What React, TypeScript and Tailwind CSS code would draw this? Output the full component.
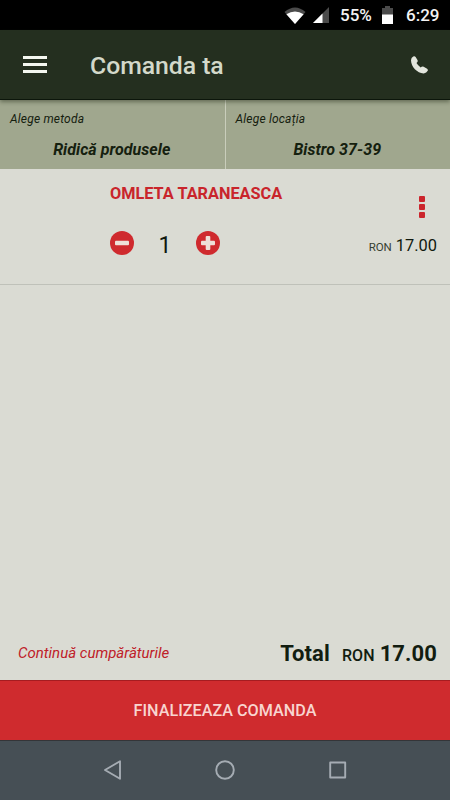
import type { ReactNode } from "react";

function StatusBar() {
  return (
    <div className="flex h-[30px] shrink-0 items-center justify-end bg-black pr-[10px] text-[17px] font-medium leading-[30px] text-[#f4f4f4]">
      <svg className="mr-[7px] h-[17px] w-[22px]" viewBox="0 0 22 17">
        <path d="M.5 5Q11-4 21.5 5L11 17Z" fill="#4b4b4b" />
        <path d="M2.4 7.3Q11 1.5 19.6 7.3L11 17Z" fill="#fff" />
      </svg>
      <svg className="mr-[11px] h-[16px] w-[16px]" viewBox="0 0 16 16">
        <path d="M16 0V16H0Z" fill="#4b4b4b" />
        <path d="M9.5 6.5V16H0Z" fill="#fff" />
      </svg>
      <span className="w-[33px] whitespace-nowrap">55%</span>
      <svg className="ml-[9px] mr-[13px] h-[18px] w-[11px]" viewBox="0 0 11 18">
        <path d="M3 0H8V2H11V9H0V2H3Z" fill="#4b4b4b" />
        <path d="M0 8.5H11V18H0Z" fill="#fff" />
      </svg>
      <span className="w-[34px] whitespace-nowrap">6:29</span>
    </div>
  );
}

function Header() {
  return (
    <header className="z-10 flex h-[70px] shrink-0 items-center border-b border-[#0c160b] bg-[#242f1f] pl-[23px] pr-[22px] shadow-[0_2px_4px_rgba(30,40,20,0.45)]">
      <div className="flex w-[24px] flex-col gap-[4px]">
        <span className="h-[3px] bg-[#f4f7f0]" />
        <span className="h-[3px] bg-[#f4f7f0]" />
        <span className="h-[3px] bg-[#f4f7f0]" />
      </div>
      <h1 className="ml-[43px] mt-[2px] grow whitespace-nowrap text-[24.8px] font-medium leading-[30px] tracking-[-0.05px] text-[#d3d9ca]">Comanda ta</h1>
      <svg className="h-[18px] w-[17px]" viewBox="0 0 17 18" fill="#e3e6dd">
        <path d="M2.2.4Q3.8-.3 4.6.9L6.5 4.1Q7 5.4 6.2 6.3L5.5 7.1Q6.9 9.6 9.7 11.4L10.6 10.8Q11.7 10.2 12.7 10.7L16.1 12.7Q17.3 13.6 16.7 14.8Q15.6 17.2 12.8 17.4C6.4 17.6 0 10.7 0 4.3Q.1 1.5 2.2.4Z" />
      </svg>
    </header>
  );
}

function Choice({ label, children }: { label: string; children: ReactNode }) {
  return (
    <div className="flex flex-1 flex-col pt-[11px] italic text-[#15200f]">
      <span className="ml-[10px] whitespace-nowrap text-[12px] leading-[16px] tracking-[0.2px]">{label}</span>
      <strong className="mr-[1px] mt-[13px] whitespace-nowrap text-center text-[16px] font-bold leading-[20px] tracking-[0.05px]">{children}</strong>
    </div>
  );
}

function RoundButton({ plus }: { plus?: boolean }) {
  return (
    <svg className="h-[24px] w-[24px]" viewBox="0 0 24 24">
      <circle cx="12" cy="12" r="12" fill="#cf2a2e" />
      <rect x="5" y="9.7" width="14" height="4.6" rx="1" fill="#eee0d8" />
      {plus && <rect x="9.7" y="5" width="4.6" height="14" rx="1" fill="#eee0d8" />}
    </svg>
  );
}

function CartItem() {
  return (
    <section className="flex h-[116px] shrink-0 justify-between border-b border-[#bfc1b9] pl-[110px] pr-[13px]">
      <div className="flex flex-col pt-[15px]">
        <h2 className="whitespace-nowrap text-[16.3px] font-bold leading-[20px] text-[#c9252b]">OMLETA TARANEASCA</h2>
        <div className="mt-[27px] flex h-[24px] items-center">
          <RoundButton />
          <span className="w-[62px] pt-[5px] text-center text-[23px] leading-[24px] text-[#10190e]">1</span>
          <RoundButton plus />
        </div>
      </div>
      <div className="flex flex-col items-end pt-[27px]">
        <div className="mr-[12px] flex flex-col gap-[2px]">
          <span className="h-[6px] w-[6px] rounded-[1px] bg-[#cb252c]" />
          <span className="h-[6px] w-[6px] rounded-[1px] bg-[#cb252c]" />
          <span className="h-[6px] w-[6px] rounded-[1px] bg-[#cb252c]" />
        </div>
        <div className="mt-[17px] whitespace-nowrap text-[16.4px] leading-[22px] text-[#10190e]">
          <span className="mr-[4px] text-[11.5px] text-[#364031]">RON</span>17.00
        </div>
      </div>
    </section>
  );
}

export default function App() {
  return (
    <main className="flex h-[800px] w-[450px] flex-col overflow-hidden bg-[#dadbd3] font-[Roboto,sans-serif]">
      <StatusBar />
      <Header />
      <div className="flex h-[69px] shrink-0 bg-[#a0a78e]">
        <Choice label="Alege metoda">Ridică produsele</Choice>
        <div className="w-px bg-[#c9cdbb]" />
        <Choice label="Alege locația">Bistro 37-39</Choice>
      </div>
      <CartItem />
      <div className="grow" />
      <div className="flex h-[54px] shrink-0 items-center justify-between pl-[18px] pr-[13px]">
        <span className="whitespace-nowrap text-[15px] italic leading-[20px] text-[#bf2028]">Continuă cumpărăturile</span>
        <div className="whitespace-nowrap pt-[4px] text-[22px] font-bold leading-[28px] tracking-[0.1px] text-[#121d10]">
          Total<span className="ml-[12px] mr-[5px] text-[16px] font-medium">RON</span>17.00
        </div>
      </div>
      <button className="h-[60px] shrink-0 border-t border-[#a51c20] bg-[#cf2b2e] text-[16.2px] font-medium leading-[59px] text-[#f8d5d0]">FINALIZEAZA COMANDA</button>
      <nav className="flex h-[60px] shrink-0 items-center justify-between border-t border-[#343538] bg-[#464f55] pb-[1px] pl-[104px] pr-[103px]">
        <svg className="h-[20px] w-[18px]" viewBox="0 0 18 20" fill="none" stroke="#a5acb3" strokeWidth="1.9" strokeLinejoin="round">
          <path d="M1 10L16 1.3V18.7Z" />
        </svg>
        <svg className="-ml-px h-[20px] w-[20px]" viewBox="0 0 20 20" fill="none" stroke="#a5acb3" strokeWidth="1.9">
          <circle cx="10" cy="10" r="8.8" />
        </svg>
        <svg className="h-[18px] w-[18px]" viewBox="0 0 18 18" fill="none" stroke="#a5acb3" strokeWidth="1.9" strokeLinejoin="round">
          <rect x="1.2" y="1.5" width="15" height="15" />
        </svg>
      </nav>
    </main>
  );
}
